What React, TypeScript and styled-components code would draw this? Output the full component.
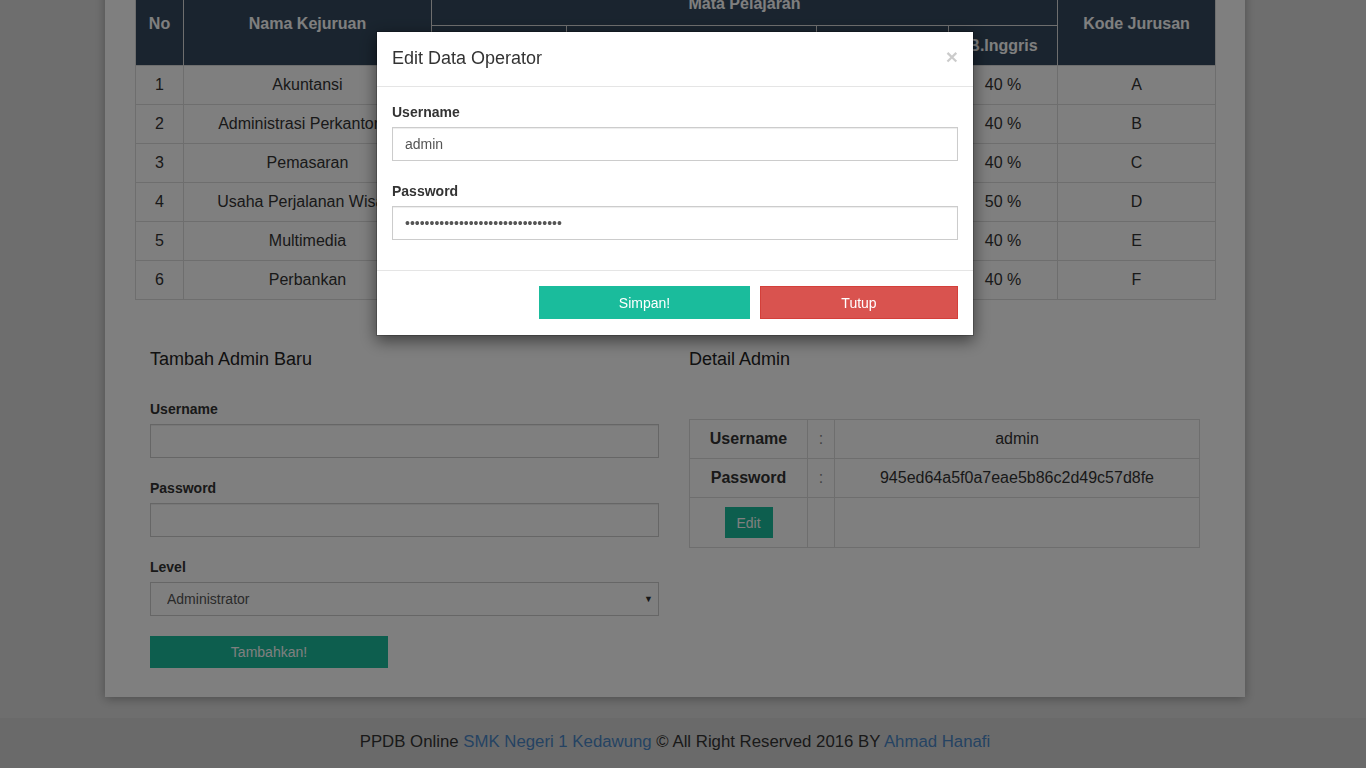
import React from "react";
import styled, { createGlobalStyle } from "styled-components";

const GlobalStyle = createGlobalStyle`
  * { box-sizing: border-box; }
  html, body { margin: 0; padding: 0; }
  body {
    background: #dddddd;
    font-family: "Liberation Sans", Arial, Helvetica, sans-serif;
    font-size: 14px;
    color: #333;
    overflow: hidden;
    height: 768px;
  }
`;

const Page = styled.div`
  margin-top: -50px;
`;

const Main = styled.main`
  padding-right: 16px;
`;

const Panel = styled.section`
  width: 1140px;
  margin: 0 auto 21px;
  background: #fff;
  box-shadow: 0 2px 10px rgba(0, 0, 0, 0.3);
  padding: 31px 30px 29px;
`;

const DataTable = styled.table`
  width: 100%;
  border-collapse: collapse;
  font-size: 16px;
  table-layout: fixed;
`;

const HeadCell = styled.th<{ $h?: number }>`
  background: #34495e;
  color: #fff;
  font-weight: bold;
  border: 1px solid #dddddd;
  text-align: center;
  vertical-align: middle;
  padding: 0 8px;
  height: ${(p) => p.$h ?? 40}px;
  white-space: nowrap;
`;

const Cell = styled.td`
  border: 1px solid #dddddd;
  text-align: center;
  vertical-align: middle;
  padding: 0 8px;
  height: 39px;
  color: #333;
  white-space: nowrap;
`;

const FormRow = styled.div`
  display: grid;
  grid-template-columns: 1fr 1fr;
  margin-top: 49px;
`;

const Col = styled.div`
  padding: 0 15px;
`;

const SectionTitle = styled.h4<{ $gap: number }>`
  margin: 0 0 ${(p) => p.$gap}px;
  font-size: 18px;
  font-weight: normal;
  line-height: 20px;
  color: #222;
`;

const FieldGroup = styled.div<{ $last?: boolean }>`
  margin-bottom: ${(p) => (p.$last ? 15 : 20)}px;
`;

const Label = styled.label`
  display: block;
  font-weight: bold;
  font-size: 14px;
  line-height: 20px;
  margin-bottom: 5px;
  color: #333;
`;

const TextInput = styled.input`
  display: block;
  width: 100%;
  height: 34px;
  padding: 6px 12px;
  font-family: inherit;
  font-size: 14px;
  color: #555;
  background: #fff;
  border: 1px solid #cccccc;
  border-radius: 0;
  box-shadow: inset 0 1px 1px rgba(0, 0, 0, 0.075);
  outline: none;
`;

const SelectWrap = styled.div`
  position: relative;
`;

const Select = styled.select`
  display: block;
  width: 100%;
  height: 34px;
  padding: 6px 24px 6px 16px;
  font-family: inherit;
  font-size: 14px;
  color: #555;
  background: #fff;
  border: 1px solid #cccccc;
  border-radius: 0;
  appearance: none;
  -webkit-appearance: none;
  outline: none;
`;

const SelectArrow = styled.span`
  position: absolute;
  right: 6px;
  top: 50%;
  transform: translateY(-50%);
  font-size: 9px;
  color: #333;
  pointer-events: none;
`;

const SolidButton = styled.button<{ $w: number; $h: number; $tone: "green" | "red" }>`
  width: ${(p) => p.$w}px;
  height: ${(p) => p.$h}px;
  padding: 0;
  font-family: inherit;
  font-size: 14px;
  color: #fff;
  background: ${(p) => (p.$tone === "green" ? "#1abc9c" : "#d9534f")};
  border: 1px solid ${(p) => (p.$tone === "green" ? "#1abc9c" : "#d43f3a")};
  border-radius: 0;
  cursor: pointer;
`;

const DetailTable = styled.table`
  width: 100%;
  border-collapse: collapse;
  font-size: 16px;
  table-layout: fixed;
`;

const DetailCell = styled.td<{ $h?: number; $bold?: boolean; $muted?: boolean }>`
  border: 1px solid #dddddd;
  height: ${(p) => p.$h ?? 39}px;
  text-align: center;
  vertical-align: middle;
  padding: 0;
  font-weight: ${(p) => (p.$bold ? "bold" : "normal")};
  color: ${(p) => (p.$muted ? "#888" : "#333")};
`;

const Footer = styled.footer`
  background: #d5d5d5;
  padding: 14px 16px 16px 0;
  text-align: center;
  font-size: 16.8px;
  line-height: 20px;
  color: #333;
`;

const FooterLink = styled.a`
  color: #4a86c5;
  text-decoration: none;
`;

/* ---------- modal ---------- */

const ModalLayer = styled.div`
  position: fixed;
  inset: 0;
  z-index: 1050;
  background: rgba(0, 0, 0, 0.5);
  padding-right: 16px;
  display: flex;
  justify-content: center;
  align-items: flex-start;
`;

const ModalBox = styled.div`
  margin-top: 31px;
  width: 598px;
  background: #fff;
  background-clip: padding-box;
  border: 1px solid rgba(0, 0, 0, 0.2);
  box-shadow: 0 5px 15px rgba(0, 0, 0, 0.5);
`;

const ModalHeader = styled.div`
  display: flex;
  align-items: center;
  justify-content: space-between;
  padding: 14px 15px 16px;
  border-bottom: 1px solid #e5e5e5;
`;

const ModalTitle = styled.h4`
  margin: 0;
  font-size: 18px;
  font-weight: normal;
  line-height: 24px;
  color: #333;
`;

const CloseX = styled.button`
  background: none;
  border: none;
  padding: 0;
  margin-top: -4px;
  font-family: inherit;
  font-size: 21px;
  font-weight: bold;
  line-height: 1;
  color: #000;
  opacity: 0.2;
  cursor: pointer;
`;

const ModalBody = styled.div`
  padding: 15px;
`;

const ModalFooter = styled.div`
  display: flex;
  justify-content: flex-end;
  gap: 10px;
  padding: 15px 15px 16px;
  border-top: 1px solid #e5e5e5;
`;

const rows = [
  { no: 1, nama: "Akuntansi", a: "30 %", b: "30 %", c: "20 %", d: "40 %", kode: "A" },
  { no: 2, nama: "Administrasi Perkantoran", a: "30 %", b: "20 %", c: "20 %", d: "40 %", kode: "B" },
  { no: 3, nama: "Pemasaran", a: "30 %", b: "20 %", c: "20 %", d: "40 %", kode: "C" },
  { no: 4, nama: "Usaha Perjalanan Wisata", a: "20 %", b: "10 %", c: "20 %", d: "50 %", kode: "D" },
  { no: 5, nama: "Multimedia", a: "20 %", b: "20 %", c: "20 %", d: "40 %", kode: "E" },
  { no: 6, nama: "Perbankan", a: "20 %", b: "20 %", c: "20 %", d: "40 %", kode: "F" },
];

export default function App() {
  return (
    <>
      <GlobalStyle />
      <Page>
        <Main>
          <Panel>
            <DataTable>
              <colgroup>
                <col style={{ width: 48 }} />
                <col style={{ width: 248 }} />
                <col style={{ width: 135 }} />
                <col style={{ width: 250 }} />
                <col style={{ width: 132 }} />
                <col style={{ width: 109 }} />
                <col style={{ width: 158 }} />
              </colgroup>
              <thead>
                <tr>
                  <HeadCell rowSpan={2} $h={44}>No</HeadCell>
                  <HeadCell rowSpan={2} $h={44}>Nama Kejuruan</HeadCell>
                  <HeadCell colSpan={4} $h={44}>Mata Pelajaran</HeadCell>
                  <HeadCell rowSpan={2} $h={44}>Kode Jurusan</HeadCell>
                </tr>
                <tr>
                  <HeadCell>B.Indonesia</HeadCell>
                  <HeadCell>Matematika</HeadCell>
                  <HeadCell>IPA</HeadCell>
                  <HeadCell>B.Inggris</HeadCell>
                </tr>
              </thead>
              <tbody>
                {rows.map((r) => (
                  <tr key={r.no}>
                    <Cell>{r.no}</Cell>
                    <Cell>{r.nama}</Cell>
                    <Cell>{r.a}</Cell>
                    <Cell>{r.b}</Cell>
                    <Cell>{r.c}</Cell>
                    <Cell>{r.d}</Cell>
                    <Cell>{r.kode}</Cell>
                  </tr>
                ))}
              </tbody>
            </DataTable>

            <FormRow>
              <Col>
                <SectionTitle $gap={30}>Tambah Admin Baru</SectionTitle>
                <FieldGroup>
                  <Label>Username</Label>
                  <TextInput type="text" />
                </FieldGroup>
                <FieldGroup>
                  <Label>Password</Label>
                  <TextInput type="password" />
                </FieldGroup>
                <FieldGroup>
                  <Label>Level</Label>
                  <SelectWrap>
                    <Select defaultValue="admin">
                      <option value="admin">Administrator</option>
                      <option value="operator">Operator</option>
                    </Select>
                    <SelectArrow>▼</SelectArrow>
                  </SelectWrap>
                </FieldGroup>
                <SolidButton $w={238} $h={32} $tone="green">Tambahkan!</SolidButton>
              </Col>
              <Col>
                <SectionTitle $gap={50}>Detail Admin</SectionTitle>
                <DetailTable>
                  <colgroup>
                    <col style={{ width: 118 }} />
                    <col style={{ width: 27 }} />
                    <col style={{ width: 365 }} />
                  </colgroup>
                  <tbody>
                    <tr>
                      <DetailCell $bold>Username</DetailCell>
                      <DetailCell $muted>:</DetailCell>
                      <DetailCell>admin</DetailCell>
                    </tr>
                    <tr>
                      <DetailCell $bold>Password</DetailCell>
                      <DetailCell $muted>:</DetailCell>
                      <DetailCell>945ed64a5f0a7eae5b86c2d49c57d8fe</DetailCell>
                    </tr>
                    <tr>
                      <DetailCell $h={50}>
                        <SolidButton $w={48} $h={31} $tone="green">Edit</SolidButton>
                      </DetailCell>
                      <DetailCell $h={50}></DetailCell>
                      <DetailCell $h={50}></DetailCell>
                    </tr>
                  </tbody>
                </DetailTable>
              </Col>
            </FormRow>
          </Panel>
        </Main>
        <Footer>
          PPDB Online <FooterLink href="#">SMK Negeri 1 Kedawung</FooterLink> © All Right Reserved 2016 BY{" "}
          <FooterLink href="#">Ahmad Hanafi</FooterLink>
        </Footer>
      </Page>

      <ModalLayer>
        <ModalBox>
          <ModalHeader>
            <ModalTitle>Edit Data Operator</ModalTitle>
            <CloseX type="button">×</CloseX>
          </ModalHeader>
          <ModalBody>
            <FieldGroup>
              <Label>Username</Label>
              <TextInput type="text" defaultValue="admin" />
            </FieldGroup>
            <FieldGroup $last>
              <Label>Password</Label>
              <TextInput type="password" defaultValue="945ed64a5f0a7eae5b86c2d49c57d8fe" />
            </FieldGroup>
          </ModalBody>
          <ModalFooter>
            <SolidButton $w={211} $h={33} $tone="green">Simpan!</SolidButton>
            <SolidButton $w={198} $h={33} $tone="red">Tutup</SolidButton>
          </ModalFooter>
        </ModalBox>
      </ModalLayer>
    </>
  );
}
